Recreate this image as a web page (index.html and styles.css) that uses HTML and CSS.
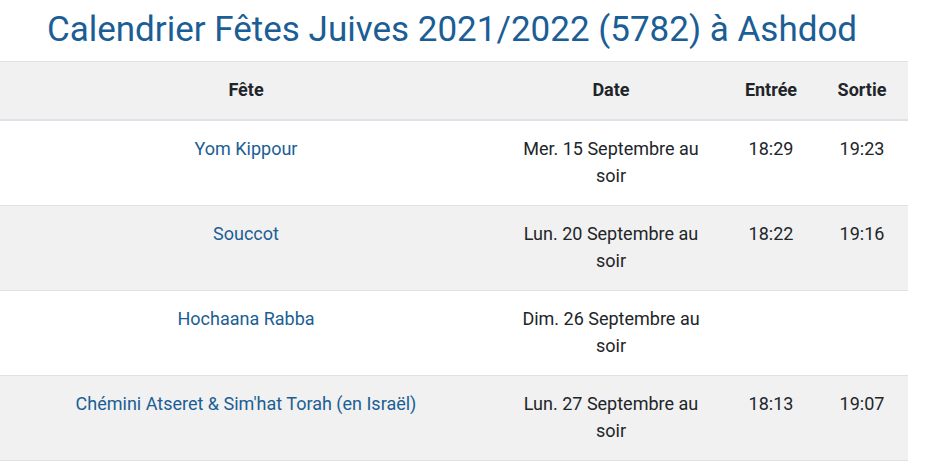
FILE: index.html
```html
<!DOCTYPE html>
<html lang="fr">
<head>
<meta charset="utf-8">
<link rel="stylesheet" href="styles.css">
</head>
<body>
<div class="page">
  <h1 class="title">Calendrier Fêtes Juives 2021/2022 (5782) à Ashdod</h1>
  <table class="cal">
    <thead>
      <tr>
        <th class="c-fete">Fête</th>
        <th class="c-date">Date</th>
        <th class="c-in">Entrée</th>
        <th class="c-out">Sortie</th>
      </tr>
    </thead>
    <tbody>
      <tr>
        <td class="c-fete"><a href="#">Yom Kippour</a></td>
        <td class="c-date">Mer. 15 Septembre au soir</td>
        <td class="c-in">18:29</td>
        <td class="c-out">19:23</td>
      </tr>
      <tr>
        <td class="c-fete"><a href="#">Souccot</a></td>
        <td class="c-date">Lun. 20 Septembre au soir</td>
        <td class="c-in">18:22</td>
        <td class="c-out">19:16</td>
      </tr>
      <tr>
        <td class="c-fete"><a href="#">Hochaana Rabba</a></td>
        <td class="c-date">Dim. 26 Septembre au soir</td>
        <td class="c-in"></td>
        <td class="c-out"></td>
      </tr>
      <tr>
        <td class="c-fete"><a href="#">Chémini Atseret &amp; Sim'hat Torah (en Israël)</a></td>
        <td class="c-date">Lun. 27 Septembre au soir</td>
        <td class="c-in">18:13</td>
        <td class="c-out">19:07</td>
      </tr>
    </tbody>
  </table>
</div>
</body>
</html>
```

FILE: styles.css
```css
html, body {
  margin: 0;
  padding: 0;
  background: #fff;
}
body {
  font-family: Roboto, "Liberation Sans", sans-serif;
  color: #212529;
  font-size: 18px;
  line-height: 27px;
}
.page {
  width: 908px;
}
.title {
  margin: 0;
  padding: 8px 4px 10px 0;
  text-align: center;
  font-weight: 400;
  font-size: 35px;
  line-height: 43px;
  color: #1b5e95;
}
.cal {
  width: 908px;
  border-collapse: collapse;
  table-layout: fixed;
}
.cal th, .cal td {
  text-align: center;
  vertical-align: top;
  padding: 14px 12px 16px;
  border-top: 1px solid #dee2e6;
}
.cal thead th {
  background: #f1f1f1;
  font-weight: 700;
  border-bottom: 2px solid #dee2e6;
}
.cal tbody tr:nth-child(even) td {
  background: #f1f1f1;
}
.cal tbody tr:last-child td {
  border-bottom: 1px solid #dee2e6;
}
.c-fete { width: 468px; }
.c-date { width: 182px; padding-left: 28px !important; padding-right: 28px !important; }
.c-in { width: 58px; }
.c-out { width: 68px; padding-left: 16px !important; }
.cal a {
  color: #1b5e95;
  text-decoration: none;
}
```
